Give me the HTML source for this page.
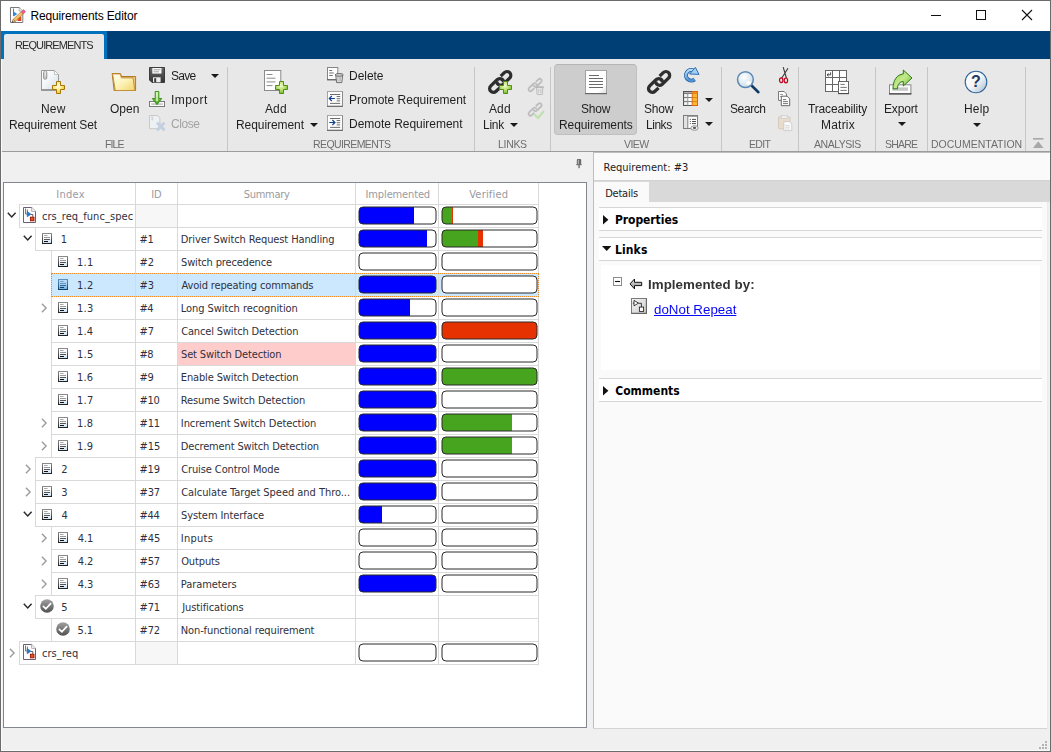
<!DOCTYPE html>
<html><head><meta charset="utf-8"><title>Requirements Editor</title>
<style>
html,body{margin:0;padding:0;}
body{width:1051px;height:752px;position:relative;overflow:hidden;background:#f0f0f0;font-family:'Liberation Sans', sans-serif;}
div{white-space:pre;}
svg{display:block;overflow:visible}
</style></head><body>
<svg width="0" height="0" style="position:absolute"><defs>
<linearGradient id="gDoc" x1="0" y1="0" x2="1" y2="1"><stop offset="0" stop-color="#fff"/><stop offset="0.6" stop-color="#fafbfd"/><stop offset="1" stop-color="#c9d3df"/></linearGradient>
<linearGradient id="gFold" x1="0" y1="0" x2="1" y2="1"><stop offset="0" stop-color="#fffdf0"/><stop offset="0.5" stop-color="#fdf3b8"/><stop offset="1" stop-color="#f1d36a"/></linearGradient>
<radialGradient id="gPlusY" cx="0.45" cy="0.4" r="0.65"><stop offset="0" stop-color="#fffef0"/><stop offset="0.5" stop-color="#ffe982"/><stop offset="1" stop-color="#f0b90c"/></radialGradient>
<radialGradient id="gPlusG" cx="0.45" cy="0.35" r="0.7"><stop offset="0" stop-color="#f0fbd0"/><stop offset="0.5" stop-color="#b9e070"/><stop offset="1" stop-color="#6cb024"/></radialGradient>
<linearGradient id="gArrG" x1="0" y1="0" x2="0" y2="1"><stop offset="0" stop-color="#b7e86a"/><stop offset="1" stop-color="#3f9a12"/></linearGradient>
<linearGradient id="gHelp" x1="0" y1="0" x2="1" y2="1"><stop offset="0" stop-color="#ffffff"/><stop offset="0.5" stop-color="#f4f7fa"/><stop offset="1" stop-color="#a5b9cc"/></linearGradient>
<linearGradient id="gSm" x1="0" y1="0" x2="0" y2="1"><stop offset="0" stop-color="#fff"/><stop offset="0.45" stop-color="#fbfcfe"/><stop offset="1" stop-color="#c9dff2"/></linearGradient>
<linearGradient id="gSmSt" gradientUnits="userSpaceOnUse" x1="0" y1="0" x2="0" y2="11"><stop offset="0" stop-color="#8e8e8e"/><stop offset="1" stop-color="#1e1e1e"/></linearGradient>
<linearGradient id="gSmStS" gradientUnits="userSpaceOnUse" x1="0" y1="0" x2="0" y2="11"><stop offset="0" stop-color="#5f93c2"/><stop offset="1" stop-color="#0f3c66"/></linearGradient>
<linearGradient id="gSmSel" x1="0" y1="0" x2="0" y2="1"><stop offset="0" stop-color="#b9dcf7"/><stop offset="0.5" stop-color="#a9d2f3"/><stop offset="1" stop-color="#6fa9d8"/></linearGradient>
<radialGradient id="gLens" cx="0.4" cy="0.35" r="0.7"><stop offset="0" stop-color="#ffffff"/><stop offset="1" stop-color="#c7dbe9"/></radialGradient>
<linearGradient id="gChk" x1="0" y1="0" x2="0" y2="1"><stop offset="0" stop-color="#a2a2a2"/><stop offset="1" stop-color="#505050"/></linearGradient>
 <linearGradient id="gDoc2" x1="0" y1="0" x2="1" y2="1"><stop offset="0" stop-color="#ffffff"/><stop offset="0.45" stop-color="#f3f6f9"/><stop offset="1" stop-color="#cfdae5"/></linearGradient>
<linearGradient id="gDocW" x1="0" y1="0" x2="1" y2="1"><stop offset="0" stop-color="#ffffff"/><stop offset="0.75" stop-color="#ffffff"/><stop offset="1" stop-color="#dcdcdc"/></linearGradient>
<linearGradient id="gFlop" x1="0" y1="0" x2="0" y2="1"><stop offset="0" stop-color="#6a6a6a"/><stop offset="1" stop-color="#333333"/></linearGradient>
<linearGradient id="gArrG2" x1="0" y1="0" x2="1" y2="1"><stop offset="0" stop-color="#8fd04a"/><stop offset="0.5" stop-color="#c4ea8a"/><stop offset="1" stop-color="#5fae24"/></linearGradient>
<linearGradient id="gRef" x1="0" y1="0" x2="0" y2="1"><stop offset="0" stop-color="#b9defa"/><stop offset="1" stop-color="#4f93d6"/></linearGradient>
<linearGradient id="gArrGrey" x1="0" y1="0" x2="0" y2="1"><stop offset="0" stop-color="#e6e6e6"/><stop offset="1" stop-color="#8e8e8e"/></linearGradient>
<linearGradient id="gLnkBox" x1="0" y1="0" x2="1" y2="1"><stop offset="0" stop-color="#f4f4f4"/><stop offset="1" stop-color="#cfcfcf"/></linearGradient>
</defs></svg>
<div style="position:absolute;left:0px;top:0px;width:1051px;height:752px;background:#f0f0f0;"></div>
<div style="position:absolute;left:1px;top:1px;width:1049px;height:30px;background:#ffffff;"></div>
<svg style="position:absolute;left:10px;top:7px" width="16" height="16" viewBox="0 0 16 16"><path d="M0.5 0.5h8.7l3.6 3.6v11.4h-12.3z" fill="#fff" stroke="#7a7a7a"/><path d="M9.2 0.5v3.6h3.6" fill="#f2f2f2" stroke="#a0a0a0" stroke-width="0.8"/><path d="M3.5 1.5v7.5" stroke="#777"/><path d="M3.5 4.6l3.800 2.500-3.800 2.500z" fill="#2f86d8"/><rect x="7.5" y="9.500" width="3.800" height="4.500" fill="#e2461a"/><path d="M3.170 12.310L11.170 4.810 13.230 6.990 5.230 14.490z" fill="#f4c06a" stroke="#a06a20" stroke-width="0.6"/><path d="M11.170 4.810L13.570 2.510 15.630 4.690 13.230 6.990z" fill="#ee5f92" stroke="#b84a70" stroke-width="0.5"/><path d="M1.900 15.700L3.170 12.310 5.230 14.490z" fill="#e8c89a" stroke="#7a5a2a" stroke-width="0.5"/><path d="M1.900 15.700l0.600-1.700 1.000 1.100z" fill="#222"/></svg>
<svg style="position:absolute;left:931px;top:15px" width="10" height="1" viewBox="0 0 10 1"><rect width="10" height="1" fill="#111"/></svg>
<svg style="position:absolute;left:976px;top:10px" width="10" height="10" viewBox="0 0 10 10"><rect x="0.5" y="0.5" width="9" height="9" fill="none" stroke="#111" stroke-width="1"/></svg>
<svg style="position:absolute;left:1021px;top:9px" width="12" height="12" viewBox="0 0 12 12"><path d="M1 1l10 10M11 1l-10 10" stroke="#111" stroke-width="1.1" fill="none"/></svg>
<div style="position:absolute;left:1px;top:31px;width:1049px;height:28px;background:#003f76;"></div>
<div style="position:absolute;left:1px;top:31px;width:106px;height:28px;background:#0072bd;"></div>
<div style="position:absolute;left:4px;top:34px;width:100px;height:25px;background:#e8e8e8;border-radius:2px 2px 0 0"></div>
<div style="position:absolute;left:1px;top:59px;width:1049px;height:92px;background:#e8e8e8;"></div>
<div style="position:absolute;left:1px;top:151px;width:1049px;height:1px;background:#9c9c9c;"></div>
<div style="position:absolute;left:227px;top:67px;width:1px;height:84px;background:#c6c6c6;"></div>
<div style="position:absolute;left:474px;top:67px;width:1px;height:84px;background:#c6c6c6;"></div>
<div style="position:absolute;left:550px;top:67px;width:1px;height:84px;background:#c6c6c6;"></div>
<div style="position:absolute;left:721px;top:67px;width:1px;height:84px;background:#c6c6c6;"></div>
<div style="position:absolute;left:798px;top:67px;width:1px;height:84px;background:#c6c6c6;"></div>
<div style="position:absolute;left:875px;top:67px;width:1px;height:84px;background:#c6c6c6;"></div>
<div style="position:absolute;left:927px;top:67px;width:1px;height:84px;background:#c6c6c6;"></div>
<div style="position:absolute;left:1025px;top:67px;width:1px;height:84px;background:#c6c6c6;"></div>
<div style="position:absolute;left:554px;top:64px;width:83px;height:71px;background:#cdcdcd;border-radius:4px;box-sizing:border-box;border:1px solid #c0c0c0;border-top-color:#b4b4b4"></div>
<svg style="position:absolute;left:211.3px;top:74px" width="8" height="4" viewBox="0 0 8 4"><path d="M0 0h8l-4.0 4z" fill="#1a1a1a"/></svg>
<svg style="position:absolute;left:310px;top:123px" width="8" height="4" viewBox="0 0 8 4"><path d="M0 0h8l-4.0 4z" fill="#1a1a1a"/></svg>
<svg style="position:absolute;left:510.4px;top:123px" width="8" height="4" viewBox="0 0 8 4"><path d="M0 0h8l-4.0 4z" fill="#1a1a1a"/></svg>
<svg style="position:absolute;left:705.2px;top:98px" width="8" height="4" viewBox="0 0 8 4"><path d="M0 0h8l-4.0 4z" fill="#1a1a1a"/></svg>
<svg style="position:absolute;left:705.2px;top:122px" width="8" height="4" viewBox="0 0 8 4"><path d="M0 0h8l-4.0 4z" fill="#1a1a1a"/></svg>
<svg style="position:absolute;left:898.2px;top:122.3px" width="8" height="4" viewBox="0 0 8 4"><path d="M0 0h8l-4.0 4z" fill="#1a1a1a"/></svg>
<svg style="position:absolute;left:973px;top:123px" width="8" height="4" viewBox="0 0 8 4"><path d="M0 0h8l-4.0 4z" fill="#1a1a1a"/></svg>
<svg style="position:absolute;left:1033px;top:138px" width="11" height="10" viewBox="0 0 11 10"><rect x="0" y="0" width="10.5" height="1.6" fill="#a8a8a8"/><path d="M5.25 3.2l5.25 6.8h-10.5z" fill="#a8a8a8"/></svg>
<svg style="position:absolute;left:40px;top:69px" width="27" height="27" viewBox="0 0 27 27"><path d="M1.5 1.5h13l4 4v15.5h-17z" fill="url(#gDoc2)" stroke="#9a9a9a" stroke-width="1"/><path d="M1 21h18" stroke="#7d7d7d" stroke-width="1.2"/><path d="M14.5 1.5v4h4z" fill="#fff" stroke="#b5b5b5" stroke-width="0.8"/><rect x="3.6" y="2.2" width="3.2" height="8" rx="1.4" fill="#c9c9c9" stroke="#8c8c8c" stroke-width="0.9"/><rect x="4.7" y="2" width="1" height="5" fill="#efefef"/><path d="M16.485 12.5H20.515V16.485H24.5V20.515H20.515V24.5H16.485V20.515H12.5V16.485H16.485Z" fill="url(#gPlusY)" stroke="#a47808" stroke-width="1" stroke-linejoin="round"/></svg>
<svg style="position:absolute;left:111px;top:72px" width="27" height="20" viewBox="0 0 27 20"><path d="M1.2 1.5h8.2l1.2 3h14v14h-21.5z" fill="#e9c77c" stroke="#b07a24" stroke-width="1"/><path d="M1.6 1.9h7.6l1.2 4h11.6l1.9 12.6h-19.6z" fill="url(#gFold)" stroke="#c08c34" stroke-width="0.9"/></svg>
<svg style="position:absolute;left:149px;top:67px" width="16" height="16" viewBox="0 0 16 16"><path d="M0.5 0.5h15v15h-12.5l-2.5-2.5z" fill="url(#gFlop)" stroke="#3c3c3c" stroke-width="1"/><rect x="3.3" y="1" width="9.2" height="5.6" fill="#fafafa"/><path d="M4.5 2.8h7M4.5 4.8h5.5" stroke="#9a9a9a" stroke-width="0.9"/><rect x="4" y="10.3" width="7.6" height="5" fill="#ededed"/><rect x="5.2" y="11.2" width="2" height="4.1" fill="#3a3a3a"/></svg>
<svg style="position:absolute;left:149px;top:91px" width="16" height="16" viewBox="0 0 16 16"><rect x="0.5" y="10.5" width="15" height="5" fill="#fdfdfd" stroke="#7a7a7a" stroke-width="1"/><rect x="2.3" y="12.2" width="11.4" height="1.8" fill="#c9c9c9"/><path d="M6.2 0.5h3.6v7h2.900l-4.700 6.200-4.700-6.200h2.900z" fill="url(#gArrG)" stroke="#2f8a1a" stroke-width="0.9" stroke-linejoin="round"/><path d="M8 1.200v9" stroke="#f4ffe6" stroke-width="1.3"/></svg>
<svg style="position:absolute;left:149px;top:115px" width="17" height="17" viewBox="0 0 17 17"><path d="M0.5 0.5h7.8l2.6 2.6v10.6h-10.4z" fill="#eef1f4" stroke="#c9c9c9" stroke-width="1"/><rect x="2.4" y="1.4" width="1.7" height="4" fill="#d2d2d2"/><path d="M8.800 8.500l5.900 5.900M14.700 8.500l-5.900 5.900" stroke="#c3d0e2" stroke-width="3" stroke-linecap="round"/></svg>
<svg style="position:absolute;left:263px;top:69px" width="27" height="27" viewBox="0 0 27 27"><rect x="1.5" y="1.5" width="16.3" height="20" fill="url(#gDocW)" stroke="#8a8a8a" stroke-width="1"/><path d="M3.5 5.5h6M3.5 9.2h9M3.5 12.9h9M3.5 16.6h6" stroke="#8c8c8c" stroke-width="1"/><path d="M16.485 12.5H20.515V16.485H24.5V20.515H20.515V24.5H16.485V20.515H12.5V16.485H16.485Z" fill="url(#gPlusG)" stroke="#4f8f14" stroke-width="1" stroke-linejoin="round"/></svg>
<svg style="position:absolute;left:327px;top:67px" width="17" height="17" viewBox="0 0 17 17"><rect x="0.5" y="0.5" width="10.3" height="12.2" fill="#fff" stroke="#858585" stroke-width="1"/><path d="M0 12.800h9" stroke="#5a5a5a" stroke-width="1"/><path d="M2.2 3.500h3M2.2 6h4.500M2.2 8.500h3.500" stroke="#5f5f5f" stroke-width="0.9"/><path d="M8.800 8.600h6.800l-0.800 7h-5.200z" fill="#f1f1f1" stroke="#5f5f5f" stroke-width="0.9"/><ellipse cx="12.200" cy="7.900" rx="4.100" ry="1.300" fill="#d9d9d9" stroke="#555" stroke-width="0.9"/><path d="M10.800 10v4.500M12.200 10v4.500M13.600 10v4.500" stroke="#9a9a9a" stroke-width="0.7"/></svg>
<svg style="position:absolute;left:327px;top:91px" width="16" height="16" viewBox="0 0 16 16"><rect x="0.5" y="0.5" width="15" height="15" fill="#fcfcfc" stroke="#a4a4a4" stroke-width="1"/><path d="M0 15.300h16" stroke="#6a6a6a" stroke-width="1.2"/><path d="M15.500 0.500v15" stroke="#8a8a8a" stroke-width="1"/><path d="M3 3.500h10.200M9.700 5.500h3.500M9.700 7.700h3.500M9.700 9.900h3.500M3 12.400h10.200" stroke="#5c5c5c" stroke-width="0.9"/><path d="M2.300 7.500h5.600M4.800 5L2.300 7.500 4.800 10" stroke="#12408c" stroke-width="1.2" fill="none"/></svg>
<svg style="position:absolute;left:327px;top:115px" width="16" height="16" viewBox="0 0 16 16"><rect x="0.5" y="0.5" width="15" height="15" fill="#fcfcfc" stroke="#a4a4a4" stroke-width="1"/><path d="M0 15.300h16" stroke="#6a6a6a" stroke-width="1.2"/><path d="M15.500 0.500v15" stroke="#8a8a8a" stroke-width="1"/><path d="M3 3.500h10.200M9.700 5.500h3.500M9.700 7.700h3.500M9.700 9.900h3.500M3 12.400h10.200" stroke="#5c5c5c" stroke-width="0.9"/><path d="M2.300 7.500h5.600M5.400 5L7.900 7.500 5.400 10" stroke="#12408c" stroke-width="1.2" fill="none"/></svg>
<svg style="position:absolute;left:487px;top:69px" width="27" height="27" viewBox="0 0 27 27"><path d="M0.6 3.8L-4.4 3.8A3.8 3.8 0 0 1 -4.4 -3.8L4.4 -3.8A3.8 3.8 0 0 1 7.31 2.44" transform="translate(9.6 16.5) rotate(-44)" fill="none" stroke="#2e2e2e" stroke-width="3.3"/><path d="M0.6 3.8L-4.4 3.8A3.8 3.8 0 0 1 -4.4 -3.8L4.4 -3.8A3.8 3.8 0 0 1 7.31 2.44" transform="translate(16.8 9.4) rotate(136)" fill="none" stroke="#2e2e2e" stroke-width="3.3"/><path d="M16.485 12.5H20.515V16.485H24.5V20.515H20.515V24.5H16.485V20.515H12.5V16.485H16.485Z" fill="url(#gPlusG)" stroke="#4f8f14" stroke-width="1" stroke-linejoin="round"/></svg>
<svg style="position:absolute;left:528px;top:79px" width="17" height="17" viewBox="0 0 17 17"><path d="M0.6 1.9L-3.0 1.9A1.9 1.9 0 0 1 -3.0 -1.9L3.0 -1.9A1.9 1.9 0 0 1 4.46 1.22" transform="translate(4.6 8.2) rotate(-44)" fill="none" stroke="#bdbdbd" stroke-width="1.8"/><path d="M0.6 1.9L-3.0 1.9A1.9 1.9 0 0 1 -3.0 -1.9L3.0 -1.9A1.9 1.9 0 0 1 4.46 1.22" transform="translate(9.6 3.8) rotate(136)" fill="none" stroke="#bdbdbd" stroke-width="1.8"/><path d="M8.5 8.3h6.4l-0.6 7.2h-5.2z" fill="#e4e4e4" stroke="#b9b9b9" stroke-width="0.9"/><path d="M7.6 8h8.2" stroke="#b0b0b0" stroke-width="1.2"/><path d="M10.7 10v4M12.8 10v4" stroke="#c4c4c4" stroke-width="0.8"/></svg>
<svg style="position:absolute;left:528px;top:103px" width="17" height="17" viewBox="0 0 17 17"><path d="M0.6 1.9L-3.0 1.9A1.9 1.9 0 0 1 -3.0 -1.9L3.0 -1.9A1.9 1.9 0 0 1 4.46 1.22" transform="translate(4.6 8.6) rotate(-44)" fill="none" stroke="#bdbdbd" stroke-width="1.8"/><path d="M0.6 1.9L-3.0 1.9A1.9 1.9 0 0 1 -3.0 -1.9L3.0 -1.9A1.9 1.9 0 0 1 4.46 1.22" transform="translate(9.6 4.2) rotate(136)" fill="none" stroke="#bdbdbd" stroke-width="1.8"/><path d="M6.5 11.5l3.5 3.5 6-7" stroke="#bfe0ad" stroke-width="2" fill="none"/></svg>
<svg style="position:absolute;left:584px;top:69px" width="24" height="26" viewBox="0 0 24 26"><rect x="1.5" y="1.5" width="21" height="23" fill="url(#gDocW)" stroke="#a2a2a2" stroke-width="1"/><path d="M5 6.5h10M5 9.5h14M5 12.5h14M5 15.5h14M5 18.5h14" stroke="#6a6a6a" stroke-width="1"/><path d="M1 24.6h22" stroke="#666" stroke-width="1.2"/></svg>
<svg style="position:absolute;left:646px;top:69px" width="27" height="27" viewBox="0 0 27 27"><path d="M0.6 3.8L-4.4 3.8A3.8 3.8 0 0 1 -4.4 -3.8L4.4 -3.8A3.8 3.8 0 0 1 7.31 2.44" transform="translate(9.5 16.5) rotate(-44)" fill="none" stroke="#2e2e2e" stroke-width="3.3"/><path d="M0.6 3.8L-4.4 3.8A3.8 3.8 0 0 1 -4.4 -3.8L4.4 -3.8A3.8 3.8 0 0 1 7.31 2.44" transform="translate(16.7 9.4) rotate(136)" fill="none" stroke="#2e2e2e" stroke-width="3.3"/></svg>
<svg style="position:absolute;left:683px;top:67px" width="17" height="17" viewBox="0 0 17 17"><path d="M10.3 3.4A5.3 5.3 0 1 0 11.6 12.4" fill="none" stroke="#2563a6" stroke-width="4"/><path d="M10.3 3.4A5.3 5.3 0 1 0 11.6 12.4" fill="none" stroke="url(#gRef)" stroke-width="2.3"/><path d="M12.4 0.4L16 7.4 6.6 7z" fill="#9fd0f5" stroke="#2563a6" stroke-width="0.9" stroke-linejoin="round"/></svg>
<svg style="position:absolute;left:683px;top:91px" width="16" height="16" viewBox="0 0 16 16"><rect x="0.5" y="0.5" width="14" height="14" fill="#fff" stroke="#555" stroke-width="1"/><rect x="1" y="1" width="3.600" height="13" fill="#e0e0e0"/><rect x="1" y="1" width="8" height="1.300" fill="#b0b0b0"/><path d="M0.500 2.500h9M0.500 6.500h9M0.500 10.600h9" stroke="#6e6e6e" stroke-width="0.9"/><path d="M4.800 2.500v12" stroke="#8c8c8c" stroke-width="0.9"/><rect x="1.900" y="3.600" width="1.700" height="1.900" fill="#fafafa"/><rect x="1.900" y="7.600" width="1.700" height="1.900" fill="#fafafa"/><rect x="1.900" y="11.600" width="1.700" height="1.900" fill="#fafafa"/><rect x="9.200" y="0.500" width="5.300" height="14" fill="#fdb735" stroke="#d9690c" stroke-width="1"/><rect x="9.700" y="1" width="4.300" height="1.500" fill="#f28d1c"/><path d="M9.200 2.600h5.300M9.200 6.500h5.300M9.200 10.600h5.300" stroke="#e07a12" stroke-width="0.9"/></svg>
<svg style="position:absolute;left:683px;top:115px" width="17" height="17" viewBox="0 0 17 17"><rect x="0.5" y="0.5" width="14" height="13" fill="#fff" stroke="#7c7c7c" stroke-width="1"/><rect x="1" y="1" width="3.400" height="12" fill="#e3e3e3"/><path d="M4.800 0.500v13" stroke="#7c7c7c" stroke-width="1"/><path d="M5 1.200h9.500" stroke="#8e8e8e" stroke-width="1.300"/><path d="M6.800 4.400h1M9 4.400h4M6.800 6.500h1M9 6.500h4M6.800 8.600h1M9 8.600h4" stroke="#4e4e4e" stroke-width="1"/><ellipse cx="11.500" cy="13" rx="3.700" ry="2.300" fill="#f2f2f2" stroke="#8a8a8a" stroke-width="0.9"/><ellipse cx="11.500" cy="12.900" rx="1.600" ry="1.100" fill="#555"/></svg>
<svg style="position:absolute;left:735px;top:69px" width="26" height="26" viewBox="0 0 26 26"><path d="M15.8 15.8l7.6 7.4" stroke="#113a66" stroke-width="2.6" stroke-linecap="round"/><circle cx="10.4" cy="10.6" r="7.9" fill="url(#gLens)" stroke="#5b88b3" stroke-width="1.5"/><ellipse cx="13.6" cy="14" rx="2.6" ry="2.1" fill="#fff" opacity="0.9"/></svg>
<svg style="position:absolute;left:778px;top:67px" width="12" height="17" viewBox="0 0 12 17"><path d="M5.2 0.2L8.4 11M10 1.2L3.8 11" stroke="#3a3a3a" stroke-width="1.1" fill="none"/><ellipse cx="3.2" cy="13.2" rx="1.7" ry="2.4" fill="none" stroke="#c40018" stroke-width="1.2"/><ellipse cx="7.9" cy="13.4" rx="1.7" ry="2.4" fill="none" stroke="#c40018" stroke-width="1.2"/></svg>
<svg style="position:absolute;left:778px;top:91px" width="13" height="16" viewBox="0 0 13 16"><path d="M0.5 0.5h5.6l2.3 2.3v6.6h-7.9z" fill="#fff" stroke="#6a6a6a" stroke-width="0.9"/><path d="M2 3.5h3M2 5.5h4.5" stroke="#888" stroke-width="0.8"/><path d="M3.3 5.2h5.8l2.6 2.6v6.9h-8.4z" fill="#fff" stroke="#5a5a5a" stroke-width="0.9"/><path d="M5 8.6h3.2M5 10.6h5M5 12.6h5" stroke="#666" stroke-width="0.9"/></svg>
<svg style="position:absolute;left:778px;top:115px" width="15" height="17" viewBox="0 0 15 17"><rect x="0.5" y="1.8" width="11.5" height="12" rx="1" fill="#eadccd" stroke="#d2c7ba" stroke-width="0.9"/><rect x="3.2" y="0.4" width="6" height="3" fill="#eeeeee" stroke="#cfcfcf" stroke-width="0.8"/><path d="M5.8 6.6h5.6l2.4 2.4v6.6h-8z" fill="#fafafa" stroke="#c9c9c9" stroke-width="0.9"/><path d="M7.2 10.5h4.6M7.2 12.3h4.6M7.2 14h4.6" stroke="#d4d4d4" stroke-width="0.8"/></svg>
<svg style="position:absolute;left:825px;top:70px" width="25" height="25" viewBox="0 0 25 25"><rect x="0.5" y="0.5" width="21" height="21" fill="#fff" stroke="#666" stroke-width="1"/><path d="M7.5 0.5v21M14.5 0.5v21M0.5 7.5h21M0.5 14.5h21" stroke="#666" stroke-width="1"/><path d="M5.6 2.4v2.4h-3.4M3.6 3.4l-1.6 1.4 1.6 1.4" stroke="#333" stroke-width="0.9" fill="none"/><rect x="13.5" y="11.5" width="10" height="12" fill="#fff" stroke="#666" stroke-width="1"/><path d="M13 23.6h11" stroke="#4a4a4a" stroke-width="1.1"/><path d="M15.4 14.4h4.4M15.4 17.4h6.4M15.4 20.4h6.4" stroke="#777" stroke-width="1"/></svg>
<svg style="position:absolute;left:888px;top:69px" width="26" height="26" viewBox="0 0 26 26"><rect x="1.5" y="15.8" width="21.4" height="9" fill="#fdfdfd" stroke="#8a8a8a" stroke-width="1"/><path d="M1 24.9h22.4" stroke="#3f3f3f" stroke-width="1.2"/><rect x="4.4" y="18.4" width="15.6" height="3.4" fill="#c8c8c8"/><path d="M5 19.8C5 11 9 5.5 15.3 5V1l8.7 8-8.7 8v-4.5c-3.3 0-5.8 2.500-5.800 7.300z" fill="url(#gArrG2)" stroke="#2a7a1c" stroke-width="1" stroke-linejoin="round"/></svg>
<svg style="position:absolute;left:964px;top:70px" width="24" height="24" viewBox="0 0 24 24"><circle cx="12" cy="12" r="10.8" fill="url(#gHelp)" stroke="#2f6496" stroke-width="1.1"/><text x="12" y="17.4" text-anchor="middle" font-family="Liberation Sans, sans-serif" font-weight="bold" font-size="16" fill="#22385c">?</text></svg>
<div style="position:absolute;left:3px;top:182px;width:584px;height:546px;background:#ffffff;box-sizing:border-box;border:1px solid #828790"></div>
<svg style="position:absolute;left:576px;top:159px" width="6" height="10" viewBox="0 0 6 10"><rect x="0.8" y="0" width="4.4" height="5.6" rx="1" fill="#6a6a6a"/><rect x="1.8" y="0.8" width="1.2" height="4" fill="#b0b0b0"/><rect x="0.2" y="5.2" width="5.6" height="1" fill="#666"/><rect x="2.3" y="6" width="1.5" height="3.2" fill="#777"/></svg>
<div style="position:absolute;left:136px;top:205px;width:41px;height:22px;background:#f7f7f7;"></div>
<div style="position:absolute;left:52px;top:274px;width:486px;height:22px;background:#cce8ff;"></div>
<div style="position:absolute;left:178px;top:343px;width:177px;height:22px;background:#ffcccc;"></div>
<div style="position:absolute;left:136px;top:642px;width:41px;height:22px;background:#f7f7f7;"></div>
<div style="position:absolute;left:135px;top:183px;width:1px;height:482px;background:#d9d9d9;"></div>
<div style="position:absolute;left:177px;top:183px;width:1px;height:482px;background:#d9d9d9;"></div>
<div style="position:absolute;left:355px;top:183px;width:1px;height:482px;background:#d9d9d9;"></div>
<div style="position:absolute;left:438px;top:183px;width:1px;height:482px;background:#d9d9d9;"></div>
<div style="position:absolute;left:538px;top:183px;width:1px;height:482px;background:#d9d9d9;"></div>
<div style="position:absolute;left:19px;top:204px;width:520px;height:1px;background:#d9d9d9;"></div>
<div style="position:absolute;left:19px;top:204px;width:1px;height:24px;background:#d9d9d9;"></div>
<div style="position:absolute;left:19px;top:227px;width:520px;height:1px;background:#d9d9d9;"></div>
<div style="position:absolute;left:35px;top:227px;width:1px;height:24px;background:#d9d9d9;"></div>
<div style="position:absolute;left:35px;top:250px;width:504px;height:1px;background:#d9d9d9;"></div>
<div style="position:absolute;left:51px;top:250px;width:1px;height:24px;background:#d9d9d9;"></div>
<div style="position:absolute;left:51px;top:273px;width:488px;height:1px;background:#d9d9d9;"></div>
<div style="position:absolute;left:51px;top:273px;width:1px;height:24px;background:#d9d9d9;"></div>
<div style="position:absolute;left:51px;top:296px;width:488px;height:1px;background:#d9d9d9;"></div>
<div style="position:absolute;left:51px;top:296px;width:1px;height:24px;background:#d9d9d9;"></div>
<div style="position:absolute;left:51px;top:319px;width:488px;height:1px;background:#d9d9d9;"></div>
<div style="position:absolute;left:51px;top:319px;width:1px;height:24px;background:#d9d9d9;"></div>
<div style="position:absolute;left:51px;top:342px;width:488px;height:1px;background:#d9d9d9;"></div>
<div style="position:absolute;left:51px;top:342px;width:1px;height:24px;background:#d9d9d9;"></div>
<div style="position:absolute;left:51px;top:365px;width:488px;height:1px;background:#d9d9d9;"></div>
<div style="position:absolute;left:51px;top:365px;width:1px;height:24px;background:#d9d9d9;"></div>
<div style="position:absolute;left:51px;top:388px;width:488px;height:1px;background:#d9d9d9;"></div>
<div style="position:absolute;left:51px;top:388px;width:1px;height:24px;background:#d9d9d9;"></div>
<div style="position:absolute;left:51px;top:411px;width:488px;height:1px;background:#d9d9d9;"></div>
<div style="position:absolute;left:51px;top:411px;width:1px;height:24px;background:#d9d9d9;"></div>
<div style="position:absolute;left:51px;top:434px;width:488px;height:1px;background:#d9d9d9;"></div>
<div style="position:absolute;left:51px;top:434px;width:1px;height:24px;background:#d9d9d9;"></div>
<div style="position:absolute;left:35px;top:457px;width:504px;height:1px;background:#d9d9d9;"></div>
<div style="position:absolute;left:35px;top:457px;width:1px;height:24px;background:#d9d9d9;"></div>
<div style="position:absolute;left:35px;top:480px;width:504px;height:1px;background:#d9d9d9;"></div>
<div style="position:absolute;left:35px;top:480px;width:1px;height:24px;background:#d9d9d9;"></div>
<div style="position:absolute;left:35px;top:503px;width:504px;height:1px;background:#d9d9d9;"></div>
<div style="position:absolute;left:35px;top:503px;width:1px;height:24px;background:#d9d9d9;"></div>
<div style="position:absolute;left:35px;top:526px;width:504px;height:1px;background:#d9d9d9;"></div>
<div style="position:absolute;left:51px;top:526px;width:1px;height:24px;background:#d9d9d9;"></div>
<div style="position:absolute;left:51px;top:549px;width:488px;height:1px;background:#d9d9d9;"></div>
<div style="position:absolute;left:51px;top:549px;width:1px;height:24px;background:#d9d9d9;"></div>
<div style="position:absolute;left:51px;top:572px;width:488px;height:1px;background:#d9d9d9;"></div>
<div style="position:absolute;left:51px;top:572px;width:1px;height:24px;background:#d9d9d9;"></div>
<div style="position:absolute;left:35px;top:595px;width:504px;height:1px;background:#d9d9d9;"></div>
<div style="position:absolute;left:35px;top:595px;width:1px;height:24px;background:#d9d9d9;"></div>
<div style="position:absolute;left:35px;top:618px;width:504px;height:1px;background:#d9d9d9;"></div>
<div style="position:absolute;left:51px;top:618px;width:1px;height:24px;background:#d9d9d9;"></div>
<div style="position:absolute;left:19px;top:641px;width:520px;height:1px;background:#d9d9d9;"></div>
<div style="position:absolute;left:19px;top:641px;width:1px;height:24px;background:#d9d9d9;"></div>
<div style="position:absolute;left:19px;top:664px;width:520px;height:1px;background:#d9d9d9;"></div>
<div style="position:absolute;left:51px;top:273px;width:488px;height:24px;box-sizing:border-box;border:1px dotted #f08a24"></div>
<svg style="position:absolute;left:6.7px;top:211.5px" width="10" height="7" viewBox="0 0 10 7"><path d="M0.8 0.8l3.9 4.1 3.9-4.1" stroke="#2b2b2b" stroke-width="1.5" fill="none"/></svg>
<svg style="position:absolute;left:23px;top:207px" width="14" height="17" viewBox="0 0 14 17"><path d="M0.5 0.5h8.2l3.8 3.8v11.2h-12z" fill="#fdfdff" stroke="#66566a" stroke-width="0.95"/><path d="M8.7 0.5v3.8h3.8" fill="#fff" stroke="#9a90a0" stroke-width="0.8"/><path d="M2.5 1.5v5.5h2" stroke="#6a6a72" stroke-width="0.9" fill="none"/><path d="M4.4 2.5v3.5" stroke="#6a6a72" stroke-width="0.9"/><path d="M4.2 4.6l3.8 2.6-3.8 2.6z" fill="#1f78c8" stroke="#145a9c" stroke-width="0.5"/><path d="M8 7.5h1.8v2.5" stroke="#5a4a4a" stroke-width="0.9" fill="none"/><rect x="7.4" y="10.2" width="3.6" height="3.6" fill="#e8501a" stroke="#9a1500" stroke-width="0.9"/></svg>
<svg style="position:absolute;left:358px;top:206px" width="80" height="19" viewBox="0 0 80 19"><rect x="1" y="1" width="77" height="17" rx="4" fill="#fff"/><clipPath id="c0a"><rect x="1" y="1" width="77" height="17" rx="4"/></clipPath><rect x="0" y="0" width="56" height="19" fill="#0000ff" clip-path="url(#c0a)"/><rect x="1" y="1" width="77" height="17" rx="4" fill="none" stroke="#2a2a2a" stroke-width="1"/></svg>
<svg style="position:absolute;left:441px;top:206px" width="98" height="19" viewBox="0 0 98 19"><rect x="1" y="1" width="95" height="17" rx="4" fill="#fff"/><clipPath id="c0b"><rect x="1" y="1" width="95" height="17" rx="4"/></clipPath><rect x="1" y="0" width="10" height="19" fill="#47a41e" clip-path="url(#c0b)"/><rect x="11" y="0" width="1" height="19" fill="#e53200" clip-path="url(#c0b)"/><rect x="1" y="1" width="95" height="17" rx="4" fill="none" stroke="#2a2a2a" stroke-width="1"/></svg>
<svg style="position:absolute;left:22.7px;top:234.5px" width="10" height="7" viewBox="0 0 10 7"><path d="M0.8 0.8l3.9 4.1 3.9-4.1" stroke="#2b2b2b" stroke-width="1.5" fill="none"/></svg>
<svg style="position:absolute;left:42px;top:233px" width="10" height="11" viewBox="0 0 10 11"><rect x="0.5" y="0.5" width="9" height="10" fill="url(#gSm)" stroke="url(#gSmSt)" stroke-width="1"/><path d="M2 2.5h3.6" stroke="#a0a0a0" stroke-width="0.9"/><path d="M2 4.5h6" stroke="#8c8c8c" stroke-width="0.9"/><path d="M2 6.5h6" stroke="#555" stroke-width="1"/><path d="M2 8.5h4" stroke="#111" stroke-width="1"/></svg>
<svg style="position:absolute;left:358px;top:229px" width="80" height="19" viewBox="0 0 80 19"><rect x="1" y="1" width="77" height="17" rx="4" fill="#fff"/><clipPath id="c1a"><rect x="1" y="1" width="77" height="17" rx="4"/></clipPath><rect x="0" y="0" width="69" height="19" fill="#0000ff" clip-path="url(#c1a)"/><rect x="1" y="1" width="77" height="17" rx="4" fill="none" stroke="#2a2a2a" stroke-width="1"/></svg>
<svg style="position:absolute;left:441px;top:229px" width="98" height="19" viewBox="0 0 98 19"><rect x="1" y="1" width="95" height="17" rx="4" fill="#fff"/><clipPath id="c1b"><rect x="1" y="1" width="95" height="17" rx="4"/></clipPath><rect x="1" y="0" width="36" height="19" fill="#47a41e" clip-path="url(#c1b)"/><rect x="37" y="0" width="5" height="19" fill="#e53200" clip-path="url(#c1b)"/><rect x="1" y="1" width="95" height="17" rx="4" fill="none" stroke="#2a2a2a" stroke-width="1"/></svg>
<svg style="position:absolute;left:58px;top:256px" width="10" height="11" viewBox="0 0 10 11"><rect x="0.5" y="0.5" width="9" height="10" fill="url(#gSm)" stroke="url(#gSmSt)" stroke-width="1"/><path d="M2 2.5h3.6" stroke="#a0a0a0" stroke-width="0.9"/><path d="M2 4.5h6" stroke="#8c8c8c" stroke-width="0.9"/><path d="M2 6.5h6" stroke="#555" stroke-width="1"/><path d="M2 8.5h4" stroke="#111" stroke-width="1"/></svg>
<svg style="position:absolute;left:358px;top:252px" width="80" height="19" viewBox="0 0 80 19"><rect x="1" y="1" width="77" height="17" rx="4" fill="#fff"/><clipPath id="c2a"><rect x="1" y="1" width="77" height="17" rx="4"/></clipPath><rect x="1" y="1" width="77" height="17" rx="4" fill="none" stroke="#2a2a2a" stroke-width="1"/></svg>
<svg style="position:absolute;left:441px;top:252px" width="98" height="19" viewBox="0 0 98 19"><rect x="1" y="1" width="95" height="17" rx="4" fill="#fff"/><clipPath id="c2b"><rect x="1" y="1" width="95" height="17" rx="4"/></clipPath><rect x="1" y="1" width="95" height="17" rx="4" fill="none" stroke="#2a2a2a" stroke-width="1"/></svg>
<svg style="position:absolute;left:58px;top:279px" width="10" height="11" viewBox="0 0 10 11"><rect x="0.5" y="0.5" width="9" height="10" fill="url(#gSmSel)" stroke="url(#gSmStS)" stroke-width="1"/><path d="M2 2.5h3.6" stroke="#6f9cc4" stroke-width="0.9"/><path d="M2 4.5h6" stroke="#5a8bb8" stroke-width="0.9"/><path d="M2 6.5h6" stroke="#2f6496" stroke-width="1"/><path d="M2 8.5h4" stroke="#0d3f6e" stroke-width="1"/></svg>
<svg style="position:absolute;left:358px;top:275px" width="80" height="19" viewBox="0 0 80 19"><rect x="1" y="1" width="77" height="17" rx="4" fill="#fff"/><clipPath id="c3a"><rect x="1" y="1" width="77" height="17" rx="4"/></clipPath><rect x="0" y="0" width="78" height="19" fill="#0000ff" clip-path="url(#c3a)"/><rect x="1" y="1" width="77" height="17" rx="4" fill="none" stroke="#2a2a2a" stroke-width="1"/></svg>
<svg style="position:absolute;left:441px;top:275px" width="98" height="19" viewBox="0 0 98 19"><rect x="1" y="1" width="95" height="17" rx="4" fill="#fff"/><clipPath id="c3b"><rect x="1" y="1" width="95" height="17" rx="4"/></clipPath><rect x="1" y="1" width="95" height="17" rx="4" fill="none" stroke="#2a2a2a" stroke-width="1"/></svg>
<svg style="position:absolute;left:40.7px;top:302.5px" width="7" height="10" viewBox="0 0 7 10"><path d="M0.9 0.7l4.2 4.3-4.2 4.3" stroke="#9c9c9c" stroke-width="1.4" fill="none"/></svg>
<svg style="position:absolute;left:58px;top:302px" width="10" height="11" viewBox="0 0 10 11"><rect x="0.5" y="0.5" width="9" height="10" fill="url(#gSm)" stroke="url(#gSmSt)" stroke-width="1"/><path d="M2 2.5h3.6" stroke="#a0a0a0" stroke-width="0.9"/><path d="M2 4.5h6" stroke="#8c8c8c" stroke-width="0.9"/><path d="M2 6.5h6" stroke="#555" stroke-width="1"/><path d="M2 8.5h4" stroke="#111" stroke-width="1"/></svg>
<svg style="position:absolute;left:358px;top:298px" width="80" height="19" viewBox="0 0 80 19"><rect x="1" y="1" width="77" height="17" rx="4" fill="#fff"/><clipPath id="c4a"><rect x="1" y="1" width="77" height="17" rx="4"/></clipPath><rect x="0" y="0" width="52" height="19" fill="#0000ff" clip-path="url(#c4a)"/><rect x="1" y="1" width="77" height="17" rx="4" fill="none" stroke="#2a2a2a" stroke-width="1"/></svg>
<svg style="position:absolute;left:441px;top:298px" width="98" height="19" viewBox="0 0 98 19"><rect x="1" y="1" width="95" height="17" rx="4" fill="#fff"/><clipPath id="c4b"><rect x="1" y="1" width="95" height="17" rx="4"/></clipPath><rect x="1" y="1" width="95" height="17" rx="4" fill="none" stroke="#2a2a2a" stroke-width="1"/></svg>
<svg style="position:absolute;left:58px;top:325px" width="10" height="11" viewBox="0 0 10 11"><rect x="0.5" y="0.5" width="9" height="10" fill="url(#gSm)" stroke="url(#gSmSt)" stroke-width="1"/><path d="M2 2.5h3.6" stroke="#a0a0a0" stroke-width="0.9"/><path d="M2 4.5h6" stroke="#8c8c8c" stroke-width="0.9"/><path d="M2 6.5h6" stroke="#555" stroke-width="1"/><path d="M2 8.5h4" stroke="#111" stroke-width="1"/></svg>
<svg style="position:absolute;left:358px;top:321px" width="80" height="19" viewBox="0 0 80 19"><rect x="1" y="1" width="77" height="17" rx="4" fill="#fff"/><clipPath id="c5a"><rect x="1" y="1" width="77" height="17" rx="4"/></clipPath><rect x="0" y="0" width="78" height="19" fill="#0000ff" clip-path="url(#c5a)"/><rect x="1" y="1" width="77" height="17" rx="4" fill="none" stroke="#2a2a2a" stroke-width="1"/></svg>
<svg style="position:absolute;left:441px;top:321px" width="98" height="19" viewBox="0 0 98 19"><rect x="1" y="1" width="95" height="17" rx="4" fill="#fff"/><clipPath id="c5b"><rect x="1" y="1" width="95" height="17" rx="4"/></clipPath><rect x="1" y="0" width="95" height="19" fill="#e53200" clip-path="url(#c5b)"/><rect x="1" y="1" width="95" height="17" rx="4" fill="none" stroke="#2a2a2a" stroke-width="1"/></svg>
<svg style="position:absolute;left:58px;top:348px" width="10" height="11" viewBox="0 0 10 11"><rect x="0.5" y="0.5" width="9" height="10" fill="url(#gSm)" stroke="url(#gSmSt)" stroke-width="1"/><path d="M2 2.5h3.6" stroke="#a0a0a0" stroke-width="0.9"/><path d="M2 4.5h6" stroke="#8c8c8c" stroke-width="0.9"/><path d="M2 6.5h6" stroke="#555" stroke-width="1"/><path d="M2 8.5h4" stroke="#111" stroke-width="1"/></svg>
<svg style="position:absolute;left:358px;top:344px" width="80" height="19" viewBox="0 0 80 19"><rect x="1" y="1" width="77" height="17" rx="4" fill="#fff"/><clipPath id="c6a"><rect x="1" y="1" width="77" height="17" rx="4"/></clipPath><rect x="0" y="0" width="78" height="19" fill="#0000ff" clip-path="url(#c6a)"/><rect x="1" y="1" width="77" height="17" rx="4" fill="none" stroke="#2a2a2a" stroke-width="1"/></svg>
<svg style="position:absolute;left:441px;top:344px" width="98" height="19" viewBox="0 0 98 19"><rect x="1" y="1" width="95" height="17" rx="4" fill="#fff"/><clipPath id="c6b"><rect x="1" y="1" width="95" height="17" rx="4"/></clipPath><rect x="1" y="1" width="95" height="17" rx="4" fill="none" stroke="#2a2a2a" stroke-width="1"/></svg>
<svg style="position:absolute;left:58px;top:371px" width="10" height="11" viewBox="0 0 10 11"><rect x="0.5" y="0.5" width="9" height="10" fill="url(#gSm)" stroke="url(#gSmSt)" stroke-width="1"/><path d="M2 2.5h3.6" stroke="#a0a0a0" stroke-width="0.9"/><path d="M2 4.5h6" stroke="#8c8c8c" stroke-width="0.9"/><path d="M2 6.5h6" stroke="#555" stroke-width="1"/><path d="M2 8.5h4" stroke="#111" stroke-width="1"/></svg>
<svg style="position:absolute;left:358px;top:367px" width="80" height="19" viewBox="0 0 80 19"><rect x="1" y="1" width="77" height="17" rx="4" fill="#fff"/><clipPath id="c7a"><rect x="1" y="1" width="77" height="17" rx="4"/></clipPath><rect x="0" y="0" width="78" height="19" fill="#0000ff" clip-path="url(#c7a)"/><rect x="1" y="1" width="77" height="17" rx="4" fill="none" stroke="#2a2a2a" stroke-width="1"/></svg>
<svg style="position:absolute;left:441px;top:367px" width="98" height="19" viewBox="0 0 98 19"><rect x="1" y="1" width="95" height="17" rx="4" fill="#fff"/><clipPath id="c7b"><rect x="1" y="1" width="95" height="17" rx="4"/></clipPath><rect x="1" y="0" width="95" height="19" fill="#47a41e" clip-path="url(#c7b)"/><rect x="1" y="1" width="95" height="17" rx="4" fill="none" stroke="#2a2a2a" stroke-width="1"/></svg>
<svg style="position:absolute;left:58px;top:394px" width="10" height="11" viewBox="0 0 10 11"><rect x="0.5" y="0.5" width="9" height="10" fill="url(#gSm)" stroke="url(#gSmSt)" stroke-width="1"/><path d="M2 2.5h3.6" stroke="#a0a0a0" stroke-width="0.9"/><path d="M2 4.5h6" stroke="#8c8c8c" stroke-width="0.9"/><path d="M2 6.5h6" stroke="#555" stroke-width="1"/><path d="M2 8.5h4" stroke="#111" stroke-width="1"/></svg>
<svg style="position:absolute;left:358px;top:390px" width="80" height="19" viewBox="0 0 80 19"><rect x="1" y="1" width="77" height="17" rx="4" fill="#fff"/><clipPath id="c8a"><rect x="1" y="1" width="77" height="17" rx="4"/></clipPath><rect x="0" y="0" width="78" height="19" fill="#0000ff" clip-path="url(#c8a)"/><rect x="1" y="1" width="77" height="17" rx="4" fill="none" stroke="#2a2a2a" stroke-width="1"/></svg>
<svg style="position:absolute;left:441px;top:390px" width="98" height="19" viewBox="0 0 98 19"><rect x="1" y="1" width="95" height="17" rx="4" fill="#fff"/><clipPath id="c8b"><rect x="1" y="1" width="95" height="17" rx="4"/></clipPath><rect x="1" y="1" width="95" height="17" rx="4" fill="none" stroke="#2a2a2a" stroke-width="1"/></svg>
<svg style="position:absolute;left:40.7px;top:417.5px" width="7" height="10" viewBox="0 0 7 10"><path d="M0.9 0.7l4.2 4.3-4.2 4.3" stroke="#9c9c9c" stroke-width="1.4" fill="none"/></svg>
<svg style="position:absolute;left:58px;top:417px" width="10" height="11" viewBox="0 0 10 11"><rect x="0.5" y="0.5" width="9" height="10" fill="url(#gSm)" stroke="url(#gSmSt)" stroke-width="1"/><path d="M2 2.5h3.6" stroke="#a0a0a0" stroke-width="0.9"/><path d="M2 4.5h6" stroke="#8c8c8c" stroke-width="0.9"/><path d="M2 6.5h6" stroke="#555" stroke-width="1"/><path d="M2 8.5h4" stroke="#111" stroke-width="1"/></svg>
<svg style="position:absolute;left:358px;top:413px" width="80" height="19" viewBox="0 0 80 19"><rect x="1" y="1" width="77" height="17" rx="4" fill="#fff"/><clipPath id="c9a"><rect x="1" y="1" width="77" height="17" rx="4"/></clipPath><rect x="0" y="0" width="78" height="19" fill="#0000ff" clip-path="url(#c9a)"/><rect x="1" y="1" width="77" height="17" rx="4" fill="none" stroke="#2a2a2a" stroke-width="1"/></svg>
<svg style="position:absolute;left:441px;top:413px" width="98" height="19" viewBox="0 0 98 19"><rect x="1" y="1" width="95" height="17" rx="4" fill="#fff"/><clipPath id="c9b"><rect x="1" y="1" width="95" height="17" rx="4"/></clipPath><rect x="1" y="0" width="70" height="19" fill="#47a41e" clip-path="url(#c9b)"/><rect x="1" y="1" width="95" height="17" rx="4" fill="none" stroke="#2a2a2a" stroke-width="1"/></svg>
<svg style="position:absolute;left:40.7px;top:440.5px" width="7" height="10" viewBox="0 0 7 10"><path d="M0.9 0.7l4.2 4.3-4.2 4.3" stroke="#9c9c9c" stroke-width="1.4" fill="none"/></svg>
<svg style="position:absolute;left:58px;top:440px" width="10" height="11" viewBox="0 0 10 11"><rect x="0.5" y="0.5" width="9" height="10" fill="url(#gSm)" stroke="url(#gSmSt)" stroke-width="1"/><path d="M2 2.5h3.6" stroke="#a0a0a0" stroke-width="0.9"/><path d="M2 4.5h6" stroke="#8c8c8c" stroke-width="0.9"/><path d="M2 6.5h6" stroke="#555" stroke-width="1"/><path d="M2 8.5h4" stroke="#111" stroke-width="1"/></svg>
<svg style="position:absolute;left:358px;top:436px" width="80" height="19" viewBox="0 0 80 19"><rect x="1" y="1" width="77" height="17" rx="4" fill="#fff"/><clipPath id="c10a"><rect x="1" y="1" width="77" height="17" rx="4"/></clipPath><rect x="0" y="0" width="78" height="19" fill="#0000ff" clip-path="url(#c10a)"/><rect x="1" y="1" width="77" height="17" rx="4" fill="none" stroke="#2a2a2a" stroke-width="1"/></svg>
<svg style="position:absolute;left:441px;top:436px" width="98" height="19" viewBox="0 0 98 19"><rect x="1" y="1" width="95" height="17" rx="4" fill="#fff"/><clipPath id="c10b"><rect x="1" y="1" width="95" height="17" rx="4"/></clipPath><rect x="1" y="0" width="70" height="19" fill="#47a41e" clip-path="url(#c10b)"/><rect x="1" y="1" width="95" height="17" rx="4" fill="none" stroke="#2a2a2a" stroke-width="1"/></svg>
<svg style="position:absolute;left:24.7px;top:463.5px" width="7" height="10" viewBox="0 0 7 10"><path d="M0.9 0.7l4.2 4.3-4.2 4.3" stroke="#9c9c9c" stroke-width="1.4" fill="none"/></svg>
<svg style="position:absolute;left:42px;top:463px" width="10" height="11" viewBox="0 0 10 11"><rect x="0.5" y="0.5" width="9" height="10" fill="url(#gSm)" stroke="url(#gSmSt)" stroke-width="1"/><path d="M2 2.5h3.6" stroke="#a0a0a0" stroke-width="0.9"/><path d="M2 4.5h6" stroke="#8c8c8c" stroke-width="0.9"/><path d="M2 6.5h6" stroke="#555" stroke-width="1"/><path d="M2 8.5h4" stroke="#111" stroke-width="1"/></svg>
<svg style="position:absolute;left:358px;top:459px" width="80" height="19" viewBox="0 0 80 19"><rect x="1" y="1" width="77" height="17" rx="4" fill="#fff"/><clipPath id="c11a"><rect x="1" y="1" width="77" height="17" rx="4"/></clipPath><rect x="0" y="0" width="78" height="19" fill="#0000ff" clip-path="url(#c11a)"/><rect x="1" y="1" width="77" height="17" rx="4" fill="none" stroke="#2a2a2a" stroke-width="1"/></svg>
<svg style="position:absolute;left:441px;top:459px" width="98" height="19" viewBox="0 0 98 19"><rect x="1" y="1" width="95" height="17" rx="4" fill="#fff"/><clipPath id="c11b"><rect x="1" y="1" width="95" height="17" rx="4"/></clipPath><rect x="1" y="1" width="95" height="17" rx="4" fill="none" stroke="#2a2a2a" stroke-width="1"/></svg>
<svg style="position:absolute;left:24.7px;top:486.5px" width="7" height="10" viewBox="0 0 7 10"><path d="M0.9 0.7l4.2 4.3-4.2 4.3" stroke="#9c9c9c" stroke-width="1.4" fill="none"/></svg>
<svg style="position:absolute;left:42px;top:486px" width="10" height="11" viewBox="0 0 10 11"><rect x="0.5" y="0.5" width="9" height="10" fill="url(#gSm)" stroke="url(#gSmSt)" stroke-width="1"/><path d="M2 2.5h3.6" stroke="#a0a0a0" stroke-width="0.9"/><path d="M2 4.5h6" stroke="#8c8c8c" stroke-width="0.9"/><path d="M2 6.5h6" stroke="#555" stroke-width="1"/><path d="M2 8.5h4" stroke="#111" stroke-width="1"/></svg>
<svg style="position:absolute;left:358px;top:482px" width="80" height="19" viewBox="0 0 80 19"><rect x="1" y="1" width="77" height="17" rx="4" fill="#fff"/><clipPath id="c12a"><rect x="1" y="1" width="77" height="17" rx="4"/></clipPath><rect x="0" y="0" width="78" height="19" fill="#0000ff" clip-path="url(#c12a)"/><rect x="1" y="1" width="77" height="17" rx="4" fill="none" stroke="#2a2a2a" stroke-width="1"/></svg>
<svg style="position:absolute;left:441px;top:482px" width="98" height="19" viewBox="0 0 98 19"><rect x="1" y="1" width="95" height="17" rx="4" fill="#fff"/><clipPath id="c12b"><rect x="1" y="1" width="95" height="17" rx="4"/></clipPath><rect x="1" y="1" width="95" height="17" rx="4" fill="none" stroke="#2a2a2a" stroke-width="1"/></svg>
<svg style="position:absolute;left:22.7px;top:510.5px" width="10" height="7" viewBox="0 0 10 7"><path d="M0.8 0.8l3.9 4.1 3.9-4.1" stroke="#2b2b2b" stroke-width="1.5" fill="none"/></svg>
<svg style="position:absolute;left:42px;top:509px" width="10" height="11" viewBox="0 0 10 11"><rect x="0.5" y="0.5" width="9" height="10" fill="url(#gSm)" stroke="url(#gSmSt)" stroke-width="1"/><path d="M2 2.5h3.6" stroke="#a0a0a0" stroke-width="0.9"/><path d="M2 4.5h6" stroke="#8c8c8c" stroke-width="0.9"/><path d="M2 6.5h6" stroke="#555" stroke-width="1"/><path d="M2 8.5h4" stroke="#111" stroke-width="1"/></svg>
<svg style="position:absolute;left:358px;top:505px" width="80" height="19" viewBox="0 0 80 19"><rect x="1" y="1" width="77" height="17" rx="4" fill="#fff"/><clipPath id="c13a"><rect x="1" y="1" width="77" height="17" rx="4"/></clipPath><rect x="0" y="0" width="24" height="19" fill="#0000ff" clip-path="url(#c13a)"/><rect x="1" y="1" width="77" height="17" rx="4" fill="none" stroke="#2a2a2a" stroke-width="1"/></svg>
<svg style="position:absolute;left:441px;top:505px" width="98" height="19" viewBox="0 0 98 19"><rect x="1" y="1" width="95" height="17" rx="4" fill="#fff"/><clipPath id="c13b"><rect x="1" y="1" width="95" height="17" rx="4"/></clipPath><rect x="1" y="1" width="95" height="17" rx="4" fill="none" stroke="#2a2a2a" stroke-width="1"/></svg>
<svg style="position:absolute;left:40.7px;top:532.5px" width="7" height="10" viewBox="0 0 7 10"><path d="M0.9 0.7l4.2 4.3-4.2 4.3" stroke="#9c9c9c" stroke-width="1.4" fill="none"/></svg>
<svg style="position:absolute;left:58px;top:532px" width="10" height="11" viewBox="0 0 10 11"><rect x="0.5" y="0.5" width="9" height="10" fill="url(#gSm)" stroke="url(#gSmSt)" stroke-width="1"/><path d="M2 2.5h3.6" stroke="#a0a0a0" stroke-width="0.9"/><path d="M2 4.5h6" stroke="#8c8c8c" stroke-width="0.9"/><path d="M2 6.5h6" stroke="#555" stroke-width="1"/><path d="M2 8.5h4" stroke="#111" stroke-width="1"/></svg>
<svg style="position:absolute;left:358px;top:528px" width="80" height="19" viewBox="0 0 80 19"><rect x="1" y="1" width="77" height="17" rx="4" fill="#fff"/><clipPath id="c14a"><rect x="1" y="1" width="77" height="17" rx="4"/></clipPath><rect x="1" y="1" width="77" height="17" rx="4" fill="none" stroke="#2a2a2a" stroke-width="1"/></svg>
<svg style="position:absolute;left:441px;top:528px" width="98" height="19" viewBox="0 0 98 19"><rect x="1" y="1" width="95" height="17" rx="4" fill="#fff"/><clipPath id="c14b"><rect x="1" y="1" width="95" height="17" rx="4"/></clipPath><rect x="1" y="1" width="95" height="17" rx="4" fill="none" stroke="#2a2a2a" stroke-width="1"/></svg>
<svg style="position:absolute;left:40.7px;top:555.5px" width="7" height="10" viewBox="0 0 7 10"><path d="M0.9 0.7l4.2 4.3-4.2 4.3" stroke="#9c9c9c" stroke-width="1.4" fill="none"/></svg>
<svg style="position:absolute;left:58px;top:555px" width="10" height="11" viewBox="0 0 10 11"><rect x="0.5" y="0.5" width="9" height="10" fill="url(#gSm)" stroke="url(#gSmSt)" stroke-width="1"/><path d="M2 2.5h3.6" stroke="#a0a0a0" stroke-width="0.9"/><path d="M2 4.5h6" stroke="#8c8c8c" stroke-width="0.9"/><path d="M2 6.5h6" stroke="#555" stroke-width="1"/><path d="M2 8.5h4" stroke="#111" stroke-width="1"/></svg>
<svg style="position:absolute;left:358px;top:551px" width="80" height="19" viewBox="0 0 80 19"><rect x="1" y="1" width="77" height="17" rx="4" fill="#fff"/><clipPath id="c15a"><rect x="1" y="1" width="77" height="17" rx="4"/></clipPath><rect x="1" y="1" width="77" height="17" rx="4" fill="none" stroke="#2a2a2a" stroke-width="1"/></svg>
<svg style="position:absolute;left:441px;top:551px" width="98" height="19" viewBox="0 0 98 19"><rect x="1" y="1" width="95" height="17" rx="4" fill="#fff"/><clipPath id="c15b"><rect x="1" y="1" width="95" height="17" rx="4"/></clipPath><rect x="1" y="1" width="95" height="17" rx="4" fill="none" stroke="#2a2a2a" stroke-width="1"/></svg>
<svg style="position:absolute;left:40.7px;top:578.5px" width="7" height="10" viewBox="0 0 7 10"><path d="M0.9 0.7l4.2 4.3-4.2 4.3" stroke="#9c9c9c" stroke-width="1.4" fill="none"/></svg>
<svg style="position:absolute;left:58px;top:578px" width="10" height="11" viewBox="0 0 10 11"><rect x="0.5" y="0.5" width="9" height="10" fill="url(#gSm)" stroke="url(#gSmSt)" stroke-width="1"/><path d="M2 2.5h3.6" stroke="#a0a0a0" stroke-width="0.9"/><path d="M2 4.5h6" stroke="#8c8c8c" stroke-width="0.9"/><path d="M2 6.5h6" stroke="#555" stroke-width="1"/><path d="M2 8.5h4" stroke="#111" stroke-width="1"/></svg>
<svg style="position:absolute;left:358px;top:574px" width="80" height="19" viewBox="0 0 80 19"><rect x="1" y="1" width="77" height="17" rx="4" fill="#fff"/><clipPath id="c16a"><rect x="1" y="1" width="77" height="17" rx="4"/></clipPath><rect x="0" y="0" width="78" height="19" fill="#0000ff" clip-path="url(#c16a)"/><rect x="1" y="1" width="77" height="17" rx="4" fill="none" stroke="#2a2a2a" stroke-width="1"/></svg>
<svg style="position:absolute;left:441px;top:574px" width="98" height="19" viewBox="0 0 98 19"><rect x="1" y="1" width="95" height="17" rx="4" fill="#fff"/><clipPath id="c16b"><rect x="1" y="1" width="95" height="17" rx="4"/></clipPath><rect x="1" y="1" width="95" height="17" rx="4" fill="none" stroke="#2a2a2a" stroke-width="1"/></svg>
<svg style="position:absolute;left:22.7px;top:602.5px" width="10" height="7" viewBox="0 0 10 7"><path d="M0.8 0.8l3.9 4.1 3.9-4.1" stroke="#2b2b2b" stroke-width="1.5" fill="none"/></svg>
<svg style="position:absolute;left:40px;top:599px" width="14" height="14" viewBox="0 0 14 14"><circle cx="7" cy="7" r="6.8" fill="url(#gChk)"/><path d="M3.4 7.3l2.5 2.5 4.7-5.2" stroke="#fff" stroke-width="1.7" fill="none" stroke-linecap="round" stroke-linejoin="round"/></svg>
<svg style="position:absolute;left:56px;top:622px" width="14" height="14" viewBox="0 0 14 14"><circle cx="7" cy="7" r="6.8" fill="url(#gChk)"/><path d="M3.4 7.3l2.5 2.5 4.7-5.2" stroke="#fff" stroke-width="1.7" fill="none" stroke-linecap="round" stroke-linejoin="round"/></svg>
<svg style="position:absolute;left:8.7px;top:647.5px" width="7" height="10" viewBox="0 0 7 10"><path d="M0.9 0.7l4.2 4.3-4.2 4.3" stroke="#9c9c9c" stroke-width="1.4" fill="none"/></svg>
<svg style="position:absolute;left:23px;top:644px" width="14" height="17" viewBox="0 0 14 17"><path d="M0.5 0.5h8.2l3.8 3.8v11.2h-12z" fill="#fdfdff" stroke="#66566a" stroke-width="0.95"/><path d="M8.7 0.5v3.8h3.8" fill="#fff" stroke="#9a90a0" stroke-width="0.8"/><path d="M2.5 1.5v5.5h2" stroke="#6a6a72" stroke-width="0.9" fill="none"/><path d="M4.4 2.5v3.5" stroke="#6a6a72" stroke-width="0.9"/><path d="M4.2 4.6l3.8 2.6-3.8 2.6z" fill="#1f78c8" stroke="#145a9c" stroke-width="0.5"/><path d="M8 7.5h1.8v2.5" stroke="#5a4a4a" stroke-width="0.9" fill="none"/><rect x="7.4" y="10.2" width="3.6" height="3.6" fill="#e8501a" stroke="#9a1500" stroke-width="0.9"/></svg>
<svg style="position:absolute;left:358px;top:643px" width="80" height="19" viewBox="0 0 80 19"><rect x="1" y="1" width="77" height="17" rx="4" fill="#fff"/><clipPath id="c19a"><rect x="1" y="1" width="77" height="17" rx="4"/></clipPath><rect x="1" y="1" width="77" height="17" rx="4" fill="none" stroke="#2a2a2a" stroke-width="1"/></svg>
<svg style="position:absolute;left:441px;top:643px" width="98" height="19" viewBox="0 0 98 19"><rect x="1" y="1" width="95" height="17" rx="4" fill="#fff"/><clipPath id="c19b"><rect x="1" y="1" width="95" height="17" rx="4"/></clipPath><rect x="1" y="1" width="95" height="17" rx="4" fill="none" stroke="#2a2a2a" stroke-width="1"/></svg>
<div style="position:absolute;left:593px;top:152px;width:457px;height:577px;background:#fafafa;"></div>
<div style="position:absolute;left:593px;top:152px;width:1px;height:577px;background:#bebebe;"></div>
<div style="position:absolute;left:593px;top:152px;width:457px;height:1px;background:#bebebe;"></div>
<div style="position:absolute;left:593px;top:728px;width:457px;height:1px;background:#d4d4d4;"></div>
<div style="position:absolute;left:1047px;top:202px;width:1px;height:527px;background:#ebebeb;"></div>
<div style="position:absolute;left:1048px;top:202px;width:2px;height:527px;background:#f0f0f0;"></div>
<div style="position:absolute;left:594px;top:180px;width:456px;height:1px;background:#d2d2d2;"></div>
<div style="position:absolute;left:594px;top:181px;width:456px;height:21px;background:#d9d9d9;"></div>
<div style="position:absolute;left:594px;top:182px;width:55px;height:20px;background:#fafafa;"></div>
<div style="position:absolute;left:599px;top:207px;width:443px;height:1px;background:#d6d6d6;"></div>
<div style="position:absolute;left:599px;top:230px;width:443px;height:1px;background:#d6d6d6;"></div>
<div style="position:absolute;left:599px;top:208px;width:443px;height:22px;background:#ffffff;"></div>
<svg style="position:absolute;left:603px;top:214.5px" width="6" height="10" viewBox="0 0 6 10"><path d="M0 0l5.4 4.8-5.4 4.8z" fill="#111"/></svg>
<div style="position:absolute;left:599px;top:237px;width:443px;height:1px;background:#d6d6d6;"></div>
<div style="position:absolute;left:599px;top:260px;width:443px;height:1px;background:#d6d6d6;"></div>
<div style="position:absolute;left:599px;top:238px;width:443px;height:22px;background:#ffffff;"></div>
<svg style="position:absolute;left:601.5px;top:246px" width="10" height="5" viewBox="0 0 10 5"><path d="M0 0h9.4l-4.7 5z" fill="#111"/></svg>
<div style="position:absolute;left:599px;top:378px;width:443px;height:1px;background:#d6d6d6;"></div>
<div style="position:absolute;left:599px;top:401px;width:443px;height:1px;background:#d6d6d6;"></div>
<div style="position:absolute;left:599px;top:379px;width:443px;height:22px;background:#ffffff;"></div>
<svg style="position:absolute;left:603px;top:385.5px" width="6" height="10" viewBox="0 0 6 10"><path d="M0 0l5.4 4.8-5.4 4.8z" fill="#111"/></svg>
<div style="position:absolute;left:601px;top:265px;width:439px;height:105px;background:#ffffff;"></div>
<svg style="position:absolute;left:613px;top:277px" width="10" height="10" viewBox="0 0 10 10"><rect x="0.5" y="0.5" width="8" height="8" fill="#fff" stroke="#8c8c8c"/><path d="M2 4.500h5" stroke="#111" stroke-width="1.100"/></svg>
<svg style="position:absolute;left:629px;top:278px" width="14" height="12" viewBox="0 0 14 12"><path d="M1 5.900L5.500 1v3.300h7.200v3.300h-7.200v3.300z" fill="url(#gArrGrey)" stroke="#111" stroke-width="1" stroke-linejoin="miter"/></svg>
<svg style="position:absolute;left:631px;top:298px" width="16" height="16" viewBox="0 0 16 16"><rect x="0.5" y="0.5" width="15" height="15" fill="url(#gLnkBox)" stroke="#7a7a7a"/><path d="M0.500 15.400h15.400M15.400 0.500v15" stroke="#666" stroke-width="1.100" fill="none"/><path d="M3 2.400l4.500 2.700-4.500 2.700z" fill="#fff" stroke="#2a2a2a" stroke-width="0.900"/><path d="M1.800 5.100h1.200" stroke="#2a2a2a" stroke-width="0.900"/><path d="M7.500 5.300h2.900v3.700" fill="none" stroke="#2a2a2a" stroke-width="0.900"/><rect x="8.400" y="9.100" width="4.200" height="4.300" fill="#fff" stroke="#2a2a2a" stroke-width="0.900"/></svg>
<div style="position:absolute;left:1045px;top:741px;width:2px;height:2px;background:#b4b4b4;"></div>
<div style="position:absolute;left:1042px;top:744px;width:2px;height:2px;background:#b4b4b4;"></div>
<div style="position:absolute;left:1045px;top:744px;width:2px;height:2px;background:#b4b4b4;"></div>
<div style="position:absolute;left:1039px;top:747px;width:2px;height:2px;background:#b4b4b4;"></div>
<div style="position:absolute;left:1042px;top:747px;width:2px;height:2px;background:#b4b4b4;"></div>
<div style="position:absolute;left:1045px;top:747px;width:2px;height:2px;background:#b4b4b4;"></div>
<div style="position:absolute;left:0px;top:0px;width:1051px;height:1px;background:#6b6b6b;"></div>
<div style="position:absolute;left:0px;top:751px;width:1051px;height:1px;background:#6b6b6b;"></div>
<div style="position:absolute;left:0px;top:0px;width:1px;height:752px;background:#6b6b6b;"></div>
<div style="position:absolute;left:1050px;top:0px;width:1px;height:752px;background:#6b6b6b;"></div>
<div style="position:absolute;left:1px;top:59px;width:1px;height:691px;background:#fafafa;"></div>
<div style="position:absolute;left:1px;top:750px;width:1049px;height:1px;background:#fafafa;"></div>
<div style="position:absolute;left:30.4px;top:8px;font-size:12px;line-height:16px;font-family:'Liberation Sans', sans-serif;color:#000;letter-spacing:-0.13px;">Requirements Editor</div>
<div style="will-change:transform;position:absolute;left:15.17px;top:38px;font-size:11px;line-height:15px;font-family:'Liberation Sans', sans-serif;color:#2a2a2a;letter-spacing:-0.91px;">REQUIREMENTS</div>
<div style="will-change:transform;position:absolute;left:41.1px;top:101px;font-size:12px;line-height:16px;font-family:'Liberation Sans', sans-serif;color:#1f1f1f;letter-spacing:0.15px;">New</div>
<div style="will-change:transform;position:absolute;left:9.2px;top:117px;font-size:12px;line-height:16px;font-family:'Liberation Sans', sans-serif;color:#1f1f1f;letter-spacing:-0.14px;">Requirement Set</div>
<div style="will-change:transform;position:absolute;left:109.96px;top:101px;font-size:12px;line-height:16px;font-family:'Liberation Sans', sans-serif;color:#1f1f1f;letter-spacing:0.03px;">Open</div>
<div style="will-change:transform;position:absolute;left:171.01px;top:68px;font-size:12px;line-height:16px;font-family:'Liberation Sans', sans-serif;color:#1f1f1f;letter-spacing:-0.74px;">Save</div>
<div style="will-change:transform;position:absolute;left:171.24px;top:92px;font-size:12px;line-height:16px;font-family:'Liberation Sans', sans-serif;color:#1f1f1f;letter-spacing:0.45px;">Import</div>
<div style="will-change:transform;position:absolute;left:171.39px;top:116px;font-size:12px;line-height:16px;font-family:'Liberation Sans', sans-serif;color:#a3a3a3;letter-spacing:-0.44px;">Close</div>
<div style="will-change:transform;position:absolute;left:265.33px;top:101px;font-size:12px;line-height:16px;font-family:'Liberation Sans', sans-serif;color:#1f1f1f;letter-spacing:0.12px;">Add</div>
<div style="will-change:transform;position:absolute;left:236.1px;top:117px;font-size:12px;line-height:16px;font-family:'Liberation Sans', sans-serif;color:#1f1f1f;letter-spacing:-0.07px;">Requirement</div>
<div style="will-change:transform;position:absolute;left:349.2px;top:68px;font-size:12px;line-height:16px;font-family:'Liberation Sans', sans-serif;color:#1f1f1f;letter-spacing:-0.03px;">Delete</div>
<div style="will-change:transform;position:absolute;left:349.2px;top:92px;font-size:12px;line-height:16px;font-family:'Liberation Sans', sans-serif;color:#1f1f1f;letter-spacing:-0.01px;">Promote Requirement</div>
<div style="will-change:transform;position:absolute;left:349.2px;top:116px;font-size:12px;line-height:16px;font-family:'Liberation Sans', sans-serif;color:#1f1f1f;letter-spacing:-0.03px;">Demote Requirement</div>
<div style="will-change:transform;position:absolute;left:489.33px;top:101px;font-size:12px;line-height:16px;font-family:'Liberation Sans', sans-serif;color:#1f1f1f;letter-spacing:0.12px;">Add</div>
<div style="will-change:transform;position:absolute;left:483.3px;top:117px;font-size:12px;line-height:16px;font-family:'Liberation Sans', sans-serif;color:#1f1f1f;letter-spacing:-0.28px;">Link</div>
<div style="will-change:transform;position:absolute;left:580.71px;top:101px;font-size:12px;line-height:16px;font-family:'Liberation Sans', sans-serif;color:#1f1f1f;letter-spacing:-0.16px;">Show</div>
<div style="will-change:transform;position:absolute;left:559.0px;top:117px;font-size:12px;line-height:16px;font-family:'Liberation Sans', sans-serif;color:#1f1f1f;letter-spacing:-0.09px;">Requirements</div>
<div style="will-change:transform;position:absolute;left:644.01px;top:101px;font-size:12px;line-height:16px;font-family:'Liberation Sans', sans-serif;color:#1f1f1f;letter-spacing:-0.23px;">Show</div>
<div style="will-change:transform;position:absolute;left:645.6px;top:117px;font-size:12px;line-height:16px;font-family:'Liberation Sans', sans-serif;color:#1f1f1f;letter-spacing:-0.47px;">Links</div>
<div style="will-change:transform;position:absolute;left:730.31px;top:101px;font-size:12px;line-height:16px;font-family:'Liberation Sans', sans-serif;color:#1f1f1f;letter-spacing:-0.4px;">Search</div>
<div style="will-change:transform;position:absolute;left:807.93px;top:101px;font-size:12px;line-height:16px;font-family:'Liberation Sans', sans-serif;color:#1f1f1f;letter-spacing:-0.15px;">Traceability</div>
<div style="will-change:transform;position:absolute;left:820.6px;top:117px;font-size:12px;line-height:16px;font-family:'Liberation Sans', sans-serif;color:#1f1f1f;letter-spacing:0.21px;">Matrix</div>
<div style="will-change:transform;position:absolute;left:884.1px;top:101px;font-size:12px;line-height:16px;font-family:'Liberation Sans', sans-serif;color:#1f1f1f;letter-spacing:-0.17px;">Export</div>
<div style="will-change:transform;position:absolute;left:963.6px;top:101px;font-size:12px;line-height:16px;font-family:'Liberation Sans', sans-serif;color:#1f1f1f;letter-spacing:0.15px;">Help</div>
<div style="will-change:transform;position:absolute;left:104.7px;top:137px;font-size:10.5px;line-height:14px;font-family:'Liberation Sans', sans-serif;color:#6e6e6e;letter-spacing:-0.87px;">FILE</div>
<div style="will-change:transform;position:absolute;left:312.7px;top:137px;font-size:10.5px;line-height:14px;font-family:'Liberation Sans', sans-serif;color:#6e6e6e;letter-spacing:-0.6px;">REQUIREMENTS</div>
<div style="will-change:transform;position:absolute;left:498.3px;top:137px;font-size:10.5px;line-height:14px;font-family:'Liberation Sans', sans-serif;color:#6e6e6e;letter-spacing:-0.31px;">LINKS</div>
<div style="will-change:transform;position:absolute;left:623.89px;top:137px;font-size:10.5px;line-height:14px;font-family:'Liberation Sans', sans-serif;color:#6e6e6e;letter-spacing:-0.53px;">VIEW</div>
<div style="will-change:transform;position:absolute;left:749.4px;top:137px;font-size:10.5px;line-height:14px;font-family:'Liberation Sans', sans-serif;color:#6e6e6e;letter-spacing:-0.65px;">EDIT</div>
<div style="will-change:transform;position:absolute;left:813.92px;top:137px;font-size:10.5px;line-height:14px;font-family:'Liberation Sans', sans-serif;color:#6e6e6e;letter-spacing:-0.47px;">ANALYSIS</div>
<div style="will-change:transform;position:absolute;left:885.42px;top:137px;font-size:10.5px;line-height:14px;font-family:'Liberation Sans', sans-serif;color:#6e6e6e;letter-spacing:-0.77px;">SHARE</div>
<div style="will-change:transform;position:absolute;left:931.3px;top:137px;font-size:10.5px;line-height:14px;font-family:'Liberation Sans', sans-serif;color:#6e6e6e;">DOCUMENTATION</div>
<div style="position:absolute;left:56.2px;top:187px;font-size:11px;line-height:15px;font-family:'DejaVu Sans Condensed', 'Liberation Sans', sans-serif;color:#9a9a9f;letter-spacing:0.28px;">Index</div>
<div style="position:absolute;left:151.2px;top:187px;font-size:11px;line-height:15px;font-family:'DejaVu Sans Condensed', 'Liberation Sans', sans-serif;color:#9a9a9f;">ID</div>
<div style="position:absolute;left:243.82px;top:187px;font-size:11px;line-height:15px;font-family:'DejaVu Sans Condensed', 'Liberation Sans', sans-serif;color:#9a9a9f;letter-spacing:-0.3px;">Summary</div>
<div style="position:absolute;left:365.6px;top:187px;font-size:11px;line-height:15px;font-family:'DejaVu Sans Condensed', 'Liberation Sans', sans-serif;color:#9a9a9f;letter-spacing:-0.14px;">Implemented</div>
<div style="position:absolute;left:469.29px;top:187px;font-size:11px;line-height:15px;font-family:'DejaVu Sans Condensed', 'Liberation Sans', sans-serif;color:#9a9a9f;letter-spacing:0.18px;">Verified</div>
<div style="position:absolute;left:41.9px;top:209px;font-size:11px;line-height:15px;font-family:'DejaVu Sans Condensed', 'Liberation Sans', sans-serif;color:#30303c;letter-spacing:0.07px;">crs_req_func_spec</div>
<div style="position:absolute;left:60.86px;top:232px;font-size:11px;line-height:15px;font-family:'DejaVu Sans Condensed', 'Liberation Sans', sans-serif;color:#30303c;">1</div>
<div style="position:absolute;left:139.56px;top:232px;font-size:11px;line-height:15px;font-family:'DejaVu Sans Condensed', 'Liberation Sans', sans-serif;color:#30303c;letter-spacing:-0.34px;">#1</div>
<div style="position:absolute;left:180.8px;top:232px;font-size:11px;line-height:15px;font-family:'DejaVu Sans Condensed', 'Liberation Sans', sans-serif;color:#30303c;letter-spacing:-0.11px;">Driver Switch Request Handling</div>
<div style="position:absolute;left:77.06px;top:255px;font-size:11px;line-height:15px;font-family:'DejaVu Sans Condensed', 'Liberation Sans', sans-serif;color:#30303c;letter-spacing:0.25px;">1.1</div>
<div style="position:absolute;left:139.56px;top:255px;font-size:11px;line-height:15px;font-family:'DejaVu Sans Condensed', 'Liberation Sans', sans-serif;color:#30303c;letter-spacing:-0.12px;">#2</div>
<div style="position:absolute;left:181.02px;top:255px;font-size:11px;line-height:15px;font-family:'DejaVu Sans Condensed', 'Liberation Sans', sans-serif;color:#30303c;letter-spacing:-0.17px;">Switch precedence</div>
<div style="position:absolute;left:77.06px;top:278px;font-size:11px;line-height:15px;font-family:'DejaVu Sans Condensed', 'Liberation Sans', sans-serif;color:#30303c;letter-spacing:0.2px;">1.2</div>
<div style="position:absolute;left:139.56px;top:278px;font-size:11px;line-height:15px;font-family:'DejaVu Sans Condensed', 'Liberation Sans', sans-serif;color:#30303c;letter-spacing:-0.15px;">#3</div>
<div style="position:absolute;left:181.49px;top:278px;font-size:11px;line-height:15px;font-family:'DejaVu Sans Condensed', 'Liberation Sans', sans-serif;color:#30303c;letter-spacing:-0.15px;">Avoid repeating commands</div>
<div style="position:absolute;left:77.06px;top:301px;font-size:11px;line-height:15px;font-family:'DejaVu Sans Condensed', 'Liberation Sans', sans-serif;color:#30303c;letter-spacing:0.21px;">1.3</div>
<div style="position:absolute;left:139.56px;top:301px;font-size:11px;line-height:15px;font-family:'DejaVu Sans Condensed', 'Liberation Sans', sans-serif;color:#30303c;letter-spacing:-0.68px;">#4</div>
<div style="position:absolute;left:180.8px;top:301px;font-size:11px;line-height:15px;font-family:'DejaVu Sans Condensed', 'Liberation Sans', sans-serif;color:#30303c;letter-spacing:-0.07px;">Long Switch recognition</div>
<div style="position:absolute;left:77.06px;top:324px;font-size:11px;line-height:15px;font-family:'DejaVu Sans Condensed', 'Liberation Sans', sans-serif;color:#30303c;letter-spacing:0.09px;">1.4</div>
<div style="position:absolute;left:139.56px;top:324px;font-size:11px;line-height:15px;font-family:'DejaVu Sans Condensed', 'Liberation Sans', sans-serif;color:#30303c;letter-spacing:-0.1px;">#7</div>
<div style="position:absolute;left:181.13px;top:324px;font-size:11px;line-height:15px;font-family:'DejaVu Sans Condensed', 'Liberation Sans', sans-serif;color:#30303c;letter-spacing:-0.15px;">Cancel Switch Detection</div>
<div style="position:absolute;left:77.06px;top:347px;font-size:11px;line-height:15px;font-family:'DejaVu Sans Condensed', 'Liberation Sans', sans-serif;color:#30303c;letter-spacing:0.28px;">1.5</div>
<div style="position:absolute;left:139.56px;top:347px;font-size:11px;line-height:15px;font-family:'DejaVu Sans Condensed', 'Liberation Sans', sans-serif;color:#30303c;letter-spacing:-0.47px;">#8</div>
<div style="position:absolute;left:181.02px;top:347px;font-size:11px;line-height:15px;font-family:'DejaVu Sans Condensed', 'Liberation Sans', sans-serif;color:#30303c;letter-spacing:-0.15px;">Set Switch Detection</div>
<div style="position:absolute;left:77.06px;top:370px;font-size:11px;line-height:15px;font-family:'DejaVu Sans Condensed', 'Liberation Sans', sans-serif;color:#30303c;letter-spacing:0.11px;">1.6</div>
<div style="position:absolute;left:139.56px;top:370px;font-size:11px;line-height:15px;font-family:'DejaVu Sans Condensed', 'Liberation Sans', sans-serif;color:#30303c;letter-spacing:-0.37px;">#9</div>
<div style="position:absolute;left:180.8px;top:370px;font-size:11px;line-height:15px;font-family:'DejaVu Sans Condensed', 'Liberation Sans', sans-serif;color:#30303c;letter-spacing:-0.14px;">Enable Switch Detection</div>
<div style="position:absolute;left:77.06px;top:393px;font-size:11px;line-height:15px;font-family:'DejaVu Sans Condensed', 'Liberation Sans', sans-serif;color:#30303c;letter-spacing:0.22px;">1.7</div>
<div style="position:absolute;left:139.56px;top:393px;font-size:11px;line-height:15px;font-family:'DejaVu Sans Condensed', 'Liberation Sans', sans-serif;color:#30303c;letter-spacing:-0.28px;">#10</div>
<div style="position:absolute;left:180.8px;top:393px;font-size:11px;line-height:15px;font-family:'DejaVu Sans Condensed', 'Liberation Sans', sans-serif;color:#30303c;letter-spacing:-0.1px;">Resume Switch Detection</div>
<div style="position:absolute;left:77.06px;top:416px;font-size:11px;line-height:15px;font-family:'DejaVu Sans Condensed', 'Liberation Sans', sans-serif;color:#30303c;letter-spacing:0.17px;">1.8</div>
<div style="position:absolute;left:139.56px;top:416px;font-size:11px;line-height:15px;font-family:'DejaVu Sans Condensed', 'Liberation Sans', sans-serif;color:#30303c;letter-spacing:-0.15px;">#11</div>
<div style="position:absolute;left:180.8px;top:416px;font-size:11px;line-height:15px;font-family:'DejaVu Sans Condensed', 'Liberation Sans', sans-serif;color:#30303c;letter-spacing:-0.08px;">Increment Switch Detection</div>
<div style="position:absolute;left:77.06px;top:439px;font-size:11px;line-height:15px;font-family:'DejaVu Sans Condensed', 'Liberation Sans', sans-serif;color:#30303c;letter-spacing:0.18px;">1.9</div>
<div style="position:absolute;left:139.56px;top:439px;font-size:11px;line-height:15px;font-family:'DejaVu Sans Condensed', 'Liberation Sans', sans-serif;color:#30303c;letter-spacing:-0.06px;">#15</div>
<div style="position:absolute;left:180.8px;top:439px;font-size:11px;line-height:15px;font-family:'DejaVu Sans Condensed', 'Liberation Sans', sans-serif;color:#30303c;letter-spacing:-0.15px;">Decrement Switch Detection</div>
<div style="position:absolute;left:61.32px;top:462px;font-size:11px;line-height:15px;font-family:'DejaVu Sans Condensed', 'Liberation Sans', sans-serif;color:#30303c;">2</div>
<div style="position:absolute;left:139.56px;top:462px;font-size:11px;line-height:15px;font-family:'DejaVu Sans Condensed', 'Liberation Sans', sans-serif;color:#30303c;letter-spacing:-0.25px;">#19</div>
<div style="position:absolute;left:181.13px;top:462px;font-size:11px;line-height:15px;font-family:'DejaVu Sans Condensed', 'Liberation Sans', sans-serif;color:#30303c;letter-spacing:-0.1px;">Cruise Control Mode</div>
<div style="position:absolute;left:61.14px;top:485px;font-size:11px;line-height:15px;font-family:'DejaVu Sans Condensed', 'Liberation Sans', sans-serif;color:#30303c;">3</div>
<div style="position:absolute;left:139.56px;top:485px;font-size:11px;line-height:15px;font-family:'DejaVu Sans Condensed', 'Liberation Sans', sans-serif;color:#30303c;letter-spacing:-0.15px;">#37</div>
<div style="position:absolute;left:181.13px;top:485px;font-size:11px;line-height:15px;font-family:'DejaVu Sans Condensed', 'Liberation Sans', sans-serif;color:#30303c;letter-spacing:-0.04px;">Calculate Target Speed and Thro...</div>
<div style="position:absolute;left:61.59px;top:508px;font-size:11px;line-height:15px;font-family:'DejaVu Sans Condensed', 'Liberation Sans', sans-serif;color:#30303c;">4</div>
<div style="position:absolute;left:139.56px;top:508px;font-size:11px;line-height:15px;font-family:'DejaVu Sans Condensed', 'Liberation Sans', sans-serif;color:#30303c;letter-spacing:-0.37px;">#44</div>
<div style="position:absolute;left:181.02px;top:508px;font-size:11px;line-height:15px;font-family:'DejaVu Sans Condensed', 'Liberation Sans', sans-serif;color:#30303c;letter-spacing:-0.08px;">System Interface</div>
<div style="position:absolute;left:77.79px;top:531px;font-size:11px;line-height:15px;font-family:'DejaVu Sans Condensed', 'Liberation Sans', sans-serif;color:#30303c;letter-spacing:-0.12px;">4.1</div>
<div style="position:absolute;left:139.56px;top:531px;font-size:11px;line-height:15px;font-family:'DejaVu Sans Condensed', 'Liberation Sans', sans-serif;color:#30303c;letter-spacing:-0.06px;">#45</div>
<div style="position:absolute;left:180.8px;top:531px;font-size:11px;line-height:15px;font-family:'DejaVu Sans Condensed', 'Liberation Sans', sans-serif;color:#30303c;letter-spacing:0.26px;">Inputs</div>
<div style="position:absolute;left:77.79px;top:554px;font-size:11px;line-height:15px;font-family:'DejaVu Sans Condensed', 'Liberation Sans', sans-serif;color:#30303c;letter-spacing:-0.05px;">4.2</div>
<div style="position:absolute;left:139.56px;top:554px;font-size:11px;line-height:15px;font-family:'DejaVu Sans Condensed', 'Liberation Sans', sans-serif;color:#30303c;letter-spacing:-0.15px;">#57</div>
<div style="position:absolute;left:181.13px;top:554px;font-size:11px;line-height:15px;font-family:'DejaVu Sans Condensed', 'Liberation Sans', sans-serif;color:#30303c;letter-spacing:-0.11px;">Outputs</div>
<div style="position:absolute;left:77.79px;top:577px;font-size:11px;line-height:15px;font-family:'DejaVu Sans Condensed', 'Liberation Sans', sans-serif;color:#30303c;letter-spacing:-0.14px;">4.3</div>
<div style="position:absolute;left:139.56px;top:577px;font-size:11px;line-height:15px;font-family:'DejaVu Sans Condensed', 'Liberation Sans', sans-serif;color:#30303c;letter-spacing:-0.15px;">#63</div>
<div style="position:absolute;left:180.8px;top:577px;font-size:11px;line-height:15px;font-family:'DejaVu Sans Condensed', 'Liberation Sans', sans-serif;color:#30303c;letter-spacing:-0.08px;">Parameters</div>
<div style="position:absolute;left:61.22px;top:600px;font-size:11px;line-height:15px;font-family:'DejaVu Sans Condensed', 'Liberation Sans', sans-serif;color:#30303c;">5</div>
<div style="position:absolute;left:139.56px;top:600px;font-size:11px;line-height:15px;font-family:'DejaVu Sans Condensed', 'Liberation Sans', sans-serif;color:#30303c;letter-spacing:-0.15px;">#71</div>
<div style="position:absolute;left:182.26px;top:600px;font-size:11px;line-height:15px;font-family:'DejaVu Sans Condensed', 'Liberation Sans', sans-serif;color:#30303c;letter-spacing:-0.11px;">Justifications</div>
<div style="position:absolute;left:77.42px;top:623px;font-size:11px;line-height:15px;font-family:'DejaVu Sans Condensed', 'Liberation Sans', sans-serif;color:#30303c;letter-spacing:0.01px;">5.1</div>
<div style="position:absolute;left:139.56px;top:623px;font-size:11px;line-height:15px;font-family:'DejaVu Sans Condensed', 'Liberation Sans', sans-serif;color:#30303c;letter-spacing:-0.15px;">#72</div>
<div style="position:absolute;left:180.8px;top:623px;font-size:11px;line-height:15px;font-family:'DejaVu Sans Condensed', 'Liberation Sans', sans-serif;color:#30303c;letter-spacing:-0.12px;">Non-functional requirement</div>
<div style="position:absolute;left:41.9px;top:646px;font-size:11px;line-height:15px;font-family:'DejaVu Sans Condensed', 'Liberation Sans', sans-serif;color:#30303c;letter-spacing:0.1px;">crs_req</div>
<div style="position:absolute;left:603.6px;top:160px;font-size:11px;line-height:15px;font-family:'DejaVu Sans Condensed', 'Liberation Sans', sans-serif;color:#1c1c24;">Requirement: #3</div>
<div style="position:absolute;left:605.2px;top:186px;font-size:11px;line-height:15px;font-family:'DejaVu Sans Condensed', 'Liberation Sans', sans-serif;color:#1c1c24;letter-spacing:-0.22px;">Details</div>
<div style="position:absolute;left:614.9px;top:212px;font-size:12px;line-height:16px;font-family:'DejaVu Sans Condensed', 'Liberation Sans', sans-serif;color:#000;font-weight:bold;letter-spacing:-0.05px;">Properties</div>
<div style="position:absolute;left:614.9px;top:242px;font-size:12px;line-height:16px;font-family:'DejaVu Sans Condensed', 'Liberation Sans', sans-serif;color:#000;font-weight:bold;letter-spacing:0.14px;">Links</div>
<div style="position:absolute;left:615.28px;top:383px;font-size:12px;line-height:16px;font-family:'DejaVu Sans Condensed', 'Liberation Sans', sans-serif;color:#000;font-weight:bold;">Comments</div>
<div style="will-change:transform;position:absolute;left:647.97px;top:276px;font-size:13.33px;line-height:17px;font-family:'Liberation Sans', sans-serif;color:#333;font-weight:bold;letter-spacing:0.05px;">Implemented by:</div>
<div style="will-change:transform;position:absolute;left:654.23px;top:301px;font-size:13.33px;line-height:17px;font-family:'Liberation Sans', sans-serif;color:#0808f8;letter-spacing:0.01px;text-decoration:underline">doNot Repeat</div>
</body></html>
